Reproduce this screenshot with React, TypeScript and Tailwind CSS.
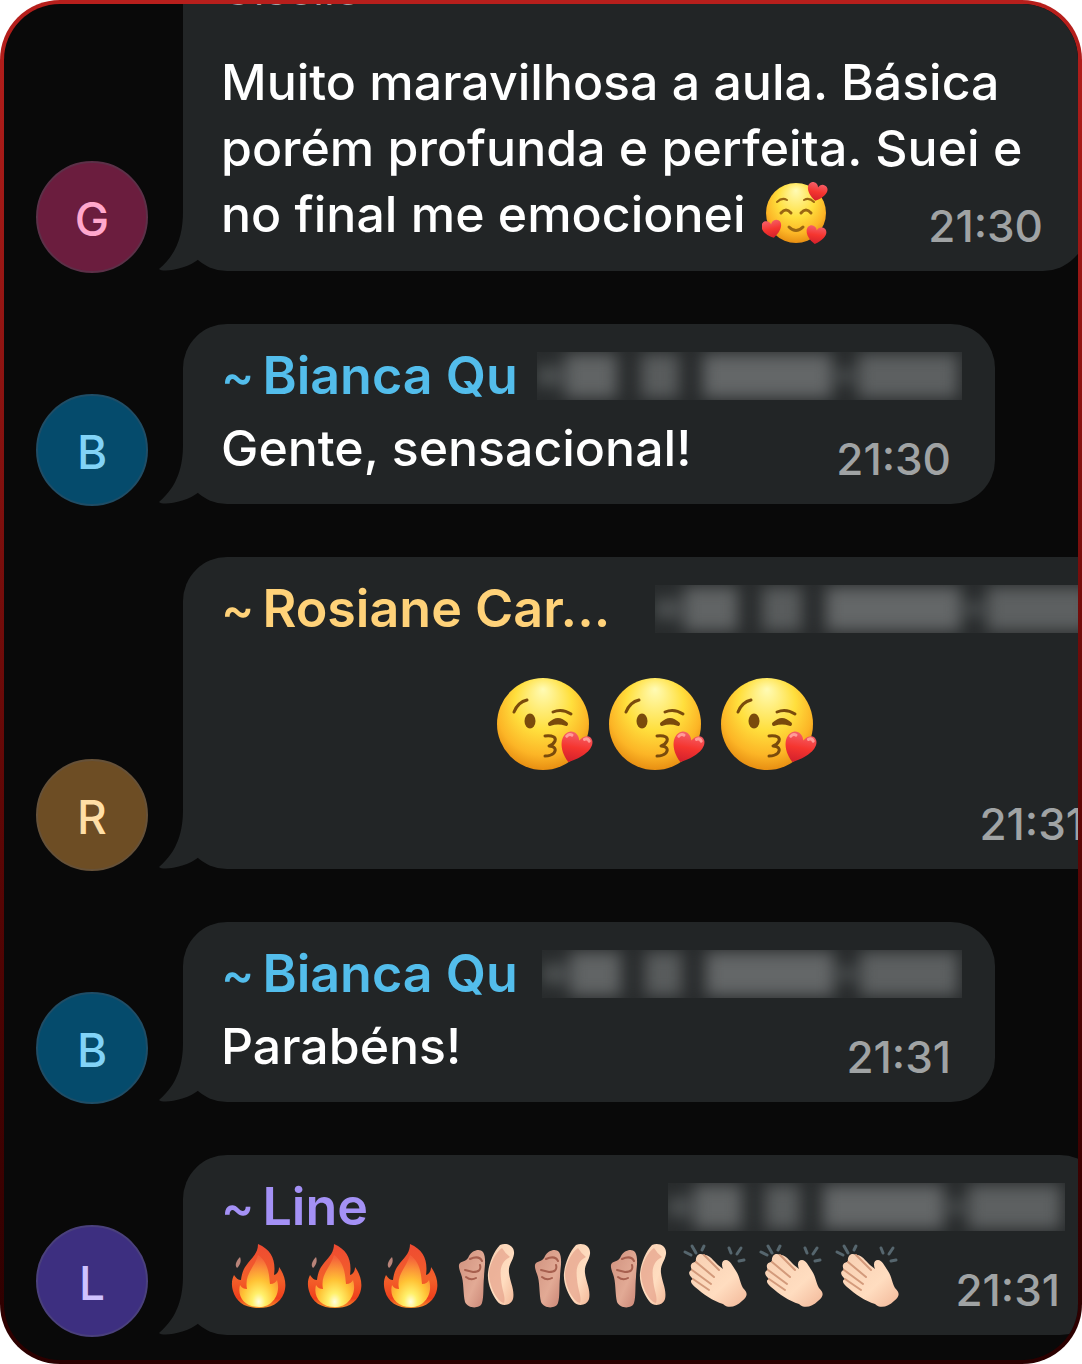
import React from "react";

type Tone = "pink" | "blue" | "amber" | "violet";

const avatarTones: Record<Tone, string> = {
  pink: "bg-[#6b1d3e] border-[#5c3048] text-[#ffa8cd]",
  blue: "bg-[#054b6c] border-[#1f4d66] text-[#82d3f7]",
  amber: "bg-[#6d4d24] border-[#665138] text-[#ffdfa6]",
  violet: "bg-[#3d2f80] border-[#4a407c] text-[#cfc2ff]",
};

const nameTones: Record<Tone, string> = {
  pink: "text-[#f288b4]",
  blue: "text-[#53bdeb]",
  amber: "text-[#ffd279]",
  violet: "text-[#a491f5]",
};

const Heart = ({ transform }: { transform: string }) => (
  <path
    transform={transform}
    d="M0 10C-14 2 -13 -9 -6 -10C-2 -10 0 -7 0 -5C1 -8 4 -10 7 -9C14 -7 12 3 0 10Z"
    fill="url(#heart)"
  />
);

// Shared gradients for the emoji below
const Gradients = () => (
  <svg className="absolute size-0" aria-hidden="true">
    <defs>
      <radialGradient id="face" cx="50%" cy="40%" r="62%" fy="12%">
        <stop offset="0" stopColor="#fffbb5" />
        <stop offset="0.5" stopColor="#ffdf3d" />
        <stop offset="0.8" stopColor="#fcb526" />
        <stop offset="1" stopColor="#e58a10" />
      </radialGradient>
      <linearGradient id="heart" x1="0" y1="0" x2="0" y2="1">
        <stop offset="0" stopColor="#f4606a" />
        <stop offset="0.5" stopColor="#f5352f" />
        <stop offset="1" stopColor="#d3202c" />
      </linearGradient>
      <linearGradient id="flame" x1="0" y1="0" x2="0" y2="1">
        <stop offset="0" stopColor="#ee4a32" />
        <stop offset="0.55" stopColor="#f3602a" />
        <stop offset="0.85" stopColor="#f0401c" />
        <stop offset="1" stopColor="#f7942a" />
      </linearGradient>
      <radialGradient id="core" cx="50%" cy="90%" r="85%">
        <stop offset="0" stopColor="#fffde0" />
        <stop offset="0.2" stopColor="#fff06a" />
        <stop offset="0.5" stopColor="#ffc235" />
        <stop offset="0.75" stopColor="#fb9238" />
        <stop offset="1" stopColor="#f4603a" />
      </radialGradient>
      <linearGradient id="skin" x1="0" y1="0" x2="1" y2="1">
        <stop offset="0" stopColor="#f7cfb2" />
        <stop offset="0.6" stopColor="#ffddc0" />
        <stop offset="1" stopColor="#f2b798" />
      </linearGradient>
      <linearGradient id="sole" x1="0" y1="0" x2="1" y2="1">
        <stop offset="0" stopColor="#cf917e" />
        <stop offset="0.6" stopColor="#e2aa95" />
        <stop offset="1" stopColor="#c98474" />
      </linearGradient>
    </defs>
  </svg>
);

const LovedFace = () => (
  <svg viewBox="0 0 66 64" className="h-16 w-[66px]" role="img" aria-label="Rosto com corações">
    <circle cx="34" cy="31" r="30" fill="url(#face)" />
    <g fill="none" stroke="#9a6612" strokeWidth="3" strokeLinecap="round">
      <path d="M15 20Q20 15 25 18M42 18Q47 15 52 20" strokeWidth="2" />
      <path d="M19 31Q24 25 29 31M39 31Q44 25 49 31" />
      <path d="M27 45Q34 52 41 45" />
    </g>
    <Heart transform="translate(55 10) rotate(12) scale(.9)" />
    <Heart transform="translate(10 47) rotate(-12) scale(.9)" />
    <Heart transform="translate(54 53) rotate(8) scale(.9)" />
  </svg>
);

const KissFace = () => (
  <svg viewBox="0 0 98 96" className="h-24 w-[98px]" role="img" aria-label="Rosto mandando beijo">
    <circle cx="46" cy="47" r="46" fill="url(#face)" />
    <g fill="none" stroke="#7a4b0c" strokeWidth="3" strokeLinecap="round" strokeLinejoin="round">
      <path d="M17 35Q21 25 30 23" />
      <path d="M56 35Q65 31 74 37" />
      <path d="M53 47Q61 39 69 47Q61 44 53 47Z" strokeWidth="4" />
      <path d="M48 59Q60 58 58 64Q56 68 52 69Q61 70 57 76Q54 79 48 79" />
    </g>
    <ellipse cx="33" cy="44" rx="5.500" ry="7.500" fill="#7a4b0c" />
    <g transform="translate(79 70) rotate(10)">
      <path
        d="M-5 16C-17 5 -18 -10 -9 -14C-4 -16 1 -12 2 -7C6 -13 12 -15 15 -9C18 -1 8 10 -5 16Z"
        fill="url(#heart)"
      />
      <path
        d="M-11 -9Q-9 -12 -6 -11M7 -9Q10 -11 12 -8"
        fill="none"
        stroke="#ff9c98"
        strokeWidth="3"
        strokeLinecap="round"
      />
    </g>
  </svg>
);

const Fire = () => (
  <svg viewBox="0 0 56 66" className="h-[66px] w-14" role="img" aria-label="Fogo">
    <path
      d="M27 1C41 7 45 18 43 32C47 31 48 27 48 24C54 32 56 42 53 50C49 61 39 65 28 65C14 65 5 59 2 48C0 41 1 36 3 32C5 35 7 37 10 37C11 29 13 25 17 20C23 13 27 9 27 1Z"
      fill="url(#flame)"
    />
    <path
      d="M27 12C38 20 38 32 39 41C43 41 45 39 46 37C50 49 43 64 28 64C13 64 6 53 9 42C11 45 13 46 16 46C13 31 24 24 27 12Z"
      fill="url(#core)"
    />
    <path d="M9 14C11 19 8 23 6 25C3 22 6 17 9 14Z" fill="#b98479" />
  </svg>
);

const Feet = () => (
  <svg viewBox="0 0 58 66" className="h-[66px] w-[58px]" role="img" aria-label="Pés">
    <path
      d="M2 20C5 18 9 18 11 13C14 7 22 5 25 9C29 15 26 27 26 34C25 44 26 54 24 60C22 66 10 66 7 59C5 51 6 38 3 31C1 26 0 22 2 20Z"
      fill="url(#sole)"
    />
    <path
      d="M12 16Q21 12 24 18M22 22Q24 29 15 29L7 27M8 34Q13 38 18 35"
      fill="none"
      stroke="#a7604f"
      strokeWidth="2"
      strokeLinecap="round"
    />
    <path
      d="M42 2C49 -1 57 3 56 11C55 18 50 22 51 30C52 39 57 47 55 56C53 63 43 64 39 58C34 51 29 40 30 30C31 20 36 8 42 2Z"
      fill="url(#skin)"
    />
    <path
      d="M52 14C42 19 42 28 43 36C44 48 48 54 46 60C38 58 31 42 31 30C32 20 38 9 44 5Q47 10 52 14Z"
      fill="#e6a28b"
      opacity=".7"
    />
  </svg>
);

const Clap = () => (
  <svg viewBox="0 0 66 66" className="size-[66px]" role="img" aria-label="Palmas">
    <g stroke="#56666e" strokeWidth="3" strokeLinecap="round">
      <path d="M3 9L9 12M10 3L14 10M22 3L20 7M47 5L49 10M59 5L55 11M57 18L62 17" />
    </g>
    <path
      d="M22 12C27 11 31 17 36 22L41 26C39 21 40 17 44 17C48 17 50 22 54 28C58 34 58 40 61 45C66 50 66 53 60 58C54 64 46 66 41 61C31 58 21 51 13 44C8 40 8 37 11 36C6 32 6 28 10 27C7 22 10 19 14 19C13 13 17 9 22 12Z"
      fill="url(#skin)"
    />
    <path
      d="M14 19L32 34M10 27L29 41M11 36L27 47M22 12L37 27"
      fill="none"
      stroke="#d39a7b"
      strokeWidth="2"
      strokeLinecap="round"
    />
  </svg>
);

// Phone number kept private: only blurred groups are drawn
const HiddenPhone = ({ className }: { className: string }) => (
  <div
    role="img"
    aria-label="Número oculto"
    className={`flex h-12 shrink-0 items-center overflow-hidden bg-white/3 pr-1 ${className}`}
  >
    <div className="flex flex-1 items-center gap-1 blur-[8px]">
      <span className="h-5 flex-[24] bg-[#4f5354]" />
      <span className="h-11 flex-[52] bg-[#616465]" />
      <span className="h-2 flex-[16]" />
      <span className="h-11 flex-[38] bg-[#595c5d]" />
      <span className="h-2 flex-[16]" />
      <span className="h-11 flex-[130] bg-[#646768]" />
      <span className="h-3 flex-[18] bg-[#4f5354]" />
      <span className="h-11 flex-[100] bg-[#5d6061]" />
    </div>
  </div>
);

const Header = ({
  name,
  tone,
  phoneClass,
}: {
  name: string;
  tone: Tone;
  phoneClass: string;
}) => (
  <div className="flex h-16 items-center justify-between">
    <h2
      className={`flex gap-2 whitespace-nowrap text-[52px] leading-[64px] font-semibold ${nameTones[tone]}`}
    >
      <span className="text-[50px] font-medium">~</span>
      {name}
    </h2>
    <HiddenPhone className={phoneClass} />
  </div>
);

const Time = ({ children }: { children: string }) => (
  <time className="text-[44px] leading-[58px] font-medium text-[#a0a3a4]">{children}</time>
);

const Message = ({
  letter,
  tone,
  className,
  children,
}: {
  letter: string;
  tone: Tone;
  className: string;
  children: React.ReactNode;
}) => (
  <li className="flex items-end gap-[35px]">
    <div
      className={`flex size-28 shrink-0 items-center justify-center rounded-full border-2 pt-1 text-[46px] font-medium ${avatarTones[tone]}`}
    >
      {letter}
    </div>
    <div
      className={`relative mb-0.5 shrink-0 rounded-[44px] bg-[#222526] pt-5 pb-4 pl-[38px] pr-[33px] ${className}`}
    >
      {/* Bubble tail */}
      <svg
        viewBox="0 0 40 60"
        className="absolute bottom-0 -left-6 h-[60px] w-10 fill-[#222526]"
        aria-hidden="true"
      >
        <path d="M24 0C24 22 19 42 0 58C4 62 28 58 40 48V0Z" />
      </svg>
      {children}
    </div>
  </li>
);

const App = () => {
  return (
    <main className="overflow-hidden rounded-[60px] bg-linear-to-b from-[#b71f1c] to-[#2a0000] p-1 font-['Inter',sans-serif] text-white">
      <Gradients />
      <ul className="flex flex-col gap-[51px] overflow-hidden rounded-[56px] bg-[#090909] pb-[23px] pl-8">
        <Message letter="G" tone="pink" className="-mt-[63px] w-[904px]">
          <h2 className="text-[44px] leading-[56px] text-[#a0a3a4]">Giselle</h2>
          <div className="mt-8 flex items-end pr-[11px]">
            <p className="mb-2 w-0 flex-1 whitespace-nowrap text-[50px] leading-[66px] font-medium">
              Muito maravilhosa a aula. Básica
              <br />
              porém profunda e perfeita. Suei e
              <br />
              <span className="flex items-center gap-4">
                no final me emocionei <LovedFace />
              </span>
            </p>
            <Time>21:30</Time>
          </div>
        </Message>

        <Message letter="B" tone="blue" className="w-[812px]">
          <Header name="Bianca Qu" tone="blue" phoneClass="w-[425px]" />
          <div className="mt-2 flex items-end justify-between pr-[11px]">
            <p className="mb-2 text-[50px] leading-[64px] font-medium">Gente, sensacional!</p>
            <Time>21:30</Time>
          </div>
        </Message>

        <Message letter="R" tone="amber" className="w-[945px]">
          <Header name="Rosiane Car..." tone="amber" phoneClass="w-[440px]" />
          <div className="mt-9 flex justify-center gap-[14px]">
            <KissFace />
            <KissFace />
            <KissFace />
          </div>
          <div className="mt-[22px] flex justify-end pr-[11px]">
            <Time>21:31</Time>
          </div>
        </Message>

        <Message letter="B" tone="blue" className="w-[812px]">
          <Header name="Bianca Qu" tone="blue" phoneClass="w-[420px]" />
          <div className="mt-2 flex items-end justify-between pr-[11px]">
            <p className="mb-2 text-[50px] leading-[64px] font-medium">Parabéns!</p>
            <Time>21:31</Time>
          </div>
        </Message>

        <Message letter="L" tone="violet" className="w-[921px]">
          <Header name="Line" tone="violet" phoneClass="mr-1.5 w-[397px]" />
          <div className="mt-1 flex items-end justify-between pr-[11px]">
            <div className="mb-[10px] grid grid-cols-[repeat(9,76px)] justify-items-center">
              <Fire />
              <Fire />
              <Fire />
              <Feet />
              <Feet />
              <Feet />
              <Clap />
              <Clap />
              <Clap />
            </div>
            <Time>21:31</Time>
          </div>
        </Message>
      </ul>
    </main>
  );
};

export default App;
